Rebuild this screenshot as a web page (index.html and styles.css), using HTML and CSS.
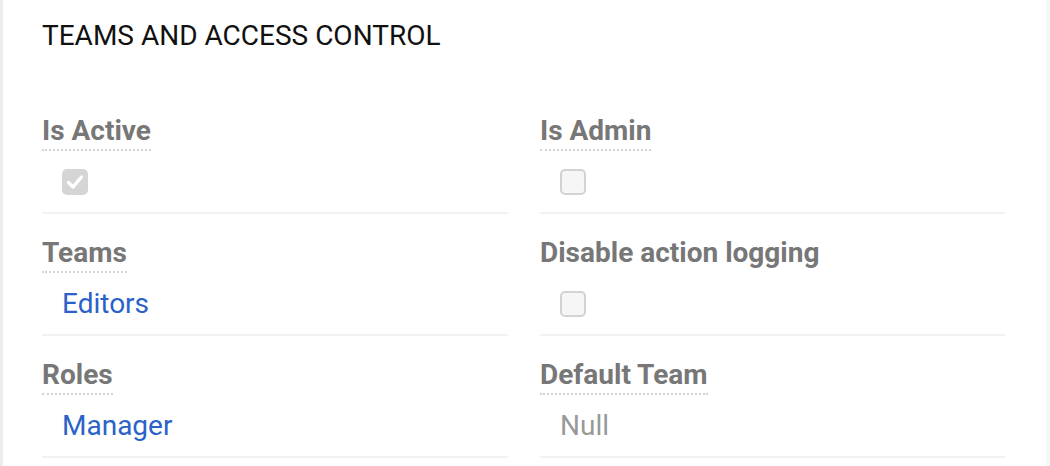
FILE: index.html
```html
<!DOCTYPE html>
<html lang="en">
<head>
<meta charset="utf-8">
<title>Teams and Access Control</title>
<link rel="stylesheet" href="styles.css">
</head>
<body>
<section class="card">
  <h2 class="card-title">TEAMS AND ACCESS CONTROL</h2>
  <div class="fields">
    <div class="field">
      <span class="label">Is Active</span>
      <div class="value"><span class="checkbox checked"><svg viewBox="0 0 26 26" width="26" height="26"><path d="M6.5 13.5l4.5 4.5 8.5-10" fill="none" stroke="#fff" stroke-width="3.4" stroke-linecap="round" stroke-linejoin="round"/></svg></span></div>
    </div>
    <div class="field">
      <span class="label">Is Admin</span>
      <div class="value"><span class="checkbox"></span></div>
    </div>
    <div class="field">
      <span class="label">Teams</span>
      <div class="value"><a class="link" href="#">Editors</a></div>
    </div>
    <div class="field">
      <span class="label plain">Disable action logging</span>
      <div class="value"><span class="checkbox"></span></div>
    </div>
    <div class="field">
      <span class="label">Roles</span>
      <div class="value"><a class="link" href="#">Manager</a></div>
    </div>
    <div class="field">
      <span class="label">Default Team</span>
      <div class="value"><span class="null">Null</span></div>
    </div>
  </div>
</section>
</body>
</html>
```
FILE: styles.css
```css
html, body {
  margin: 0;
  padding: 0;
}
body {
  background: #f8f8f8;
  font-family: Roboto, "Liberation Sans", Arial, sans-serif;
  width: 1050px;
  height: 466px;
  overflow: hidden;
}
.card {
  width: 1046px;
  height: 466px;
  background: #fff;
  border-left: 3px solid #eceeee;
  box-sizing: border-box;
  padding: 20px 0 0 39px;
}
.card-title {
  margin: 0;
  font-size: 28px;
  font-weight: 400;
  color: #111;
  line-height: 32px;
}
.fields {
  margin-top: 40px;
  width: 963px;
  display: grid;
  grid-template-columns: 466px 465px;
  column-gap: 32px;
}
.field {
  display: flex;
  flex-direction: column;
  align-items: flex-start;
  padding: 23px 0 17px;
  border-bottom: 2px solid #f2f2f2;
}
.label {
  font-size: 28px;
  font-weight: 700;
  color: #777;
  line-height: 32px;
  padding-bottom: 2px;
  border-bottom: 2px dotted #d4d4d4;
}
.label.plain {
  border-bottom-color: transparent;
}
.value {
  padding-left: 20px;
  margin-top: 18px;
  font-size: 28px;
  line-height: 26px;
  height: 26px;
  display: flex;
  align-items: center;
}
.checkbox {
  width: 26px;
  height: 26px;
  box-sizing: border-box;
  border: 2px solid #d3d3d3;
  border-radius: 5px;
  background: #f6f6f6;
  display: block;
}
.checkbox.checked {
  background: #d5d5d5;
  border-color: #d5d5d5;
}
.checkbox svg {
  display: block;
  margin: -2px;
}
.link {
  color: #2a62c9;
  text-decoration: none;
}
.null {
  color: #999;
}
```
